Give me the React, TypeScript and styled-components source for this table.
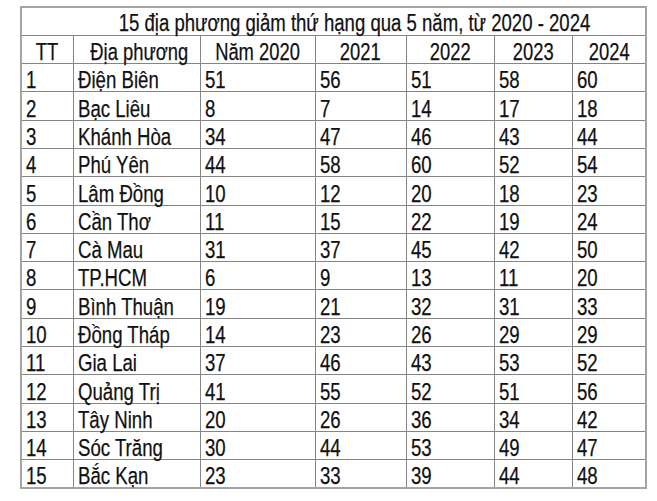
import React from "react";
import styled, { createGlobalStyle } from "styled-components";

const GlobalStyle = createGlobalStyle`
  html, body {
    margin: 0;
    padding: 0;
    background: #ffffff;
  }
  body {
    font-family: "Liberation Sans", Arial, sans-serif;
    color: #111111;
  }
`;

const Page = styled.div`
  padding: 6px 0 0 20px;
  width: 657px;
  height: 501px;
  box-sizing: border-box;
  overflow: hidden;
`;

const Table = styled.table`
  border-collapse: collapse;
  table-layout: fixed;
  width: 625px;
  border: 2px solid #a4a4a4;
`;

const Row = styled.tr`
  height: 28.3px;
`;

const Cell = styled.td<{ $center?: boolean }>`
  border: 1px solid #858585;
  padding: ${(p) => (p.$center ? "0" : "0 4px")};
  font-size: 24.5px;
  line-height: 23px;
  vertical-align: bottom;
  text-align: ${(p) => (p.$center ? "center" : "left")};
  white-space: nowrap;
  overflow: visible;
`;

const TitleCell = styled.td`
  border: 1px solid #858585;
  padding: 0 0 0 34px;
  font-size: 23.5px;
  line-height: 23px;
  vertical-align: bottom;
  text-align: center;
  white-space: nowrap;
`;

/* Narrow the sans face to match the condensed type of the original */
const Narrow = styled.span<{ $origin?: "left" | "center"; $scale?: number }>`
  display: inline-block;
  transform: scaleX(${(p) => p.$scale ?? 0.76});
  transform-origin: ${(p) => p.$origin ?? "left"} bottom;
  -webkit-text-stroke: 0.25px #111111;
`;

const columns = [52, 127, 115, 91, 88, 78, 74];

const headers = ["TT", "Địa phương", "Năm 2020", "2021", "2022", "2023", "2024"];

const data: [string, number, number, number, number, number][] = [
  ["Điện Biên", 51, 56, 51, 58, 60],
  ["Bạc Liêu", 8, 7, 14, 17, 18],
  ["Khánh Hòa", 34, 47, 46, 43, 44],
  ["Phú Yên", 44, 58, 60, 52, 54],
  ["Lâm Đồng", 10, 12, 20, 18, 23],
  ["Cần Thơ", 11, 15, 22, 19, 24],
  ["Cà Mau", 31, 37, 45, 42, 50],
  ["TP.HCM", 6, 9, 13, 11, 20],
  ["Bình Thuận", 19, 21, 32, 31, 33],
  ["Đồng Tháp", 14, 23, 26, 29, 29],
  ["Gia Lai", 37, 46, 43, 53, 52],
  ["Quảng Trị", 41, 55, 52, 51, 56],
  ["Tây Ninh", 20, 26, 36, 34, 42],
  ["Sóc Trăng", 30, 44, 53, 49, 47],
  ["Bắc Kạn", 23, 33, 39, 44, 48],
];

export default function App() {
  return (
    <>
      <GlobalStyle />
      <Page>
        <Table>
          <colgroup>
            {columns.map((w, i) => (
              <col key={i} style={{ width: w }} />
            ))}
          </colgroup>
          <tbody>
            <Row>
              <TitleCell colSpan={7}>
                <Narrow $origin="center" $scale={0.79}>
                  15 địa phương giảm thứ hạng qua 5 năm, từ 2020 - 2024
                </Narrow>
              </TitleCell>
            </Row>
            <Row>
              {headers.map((h) => (
                <Cell key={h} $center>
                  <Narrow $origin="center" $scale={0.75}>
                    {h}
                  </Narrow>
                </Cell>
              ))}
            </Row>
            {data.map((r, i) => (
              <Row key={r[0]}>
                <Cell>
                  <Narrow>{i + 1}</Narrow>
                </Cell>
                {r.map((v, j) => (
                  <Cell key={j}>
                    <Narrow>{v}</Narrow>
                  </Cell>
                ))}
              </Row>
            ))}
          </tbody>
        </Table>
      </Page>
    </>
  );
}
